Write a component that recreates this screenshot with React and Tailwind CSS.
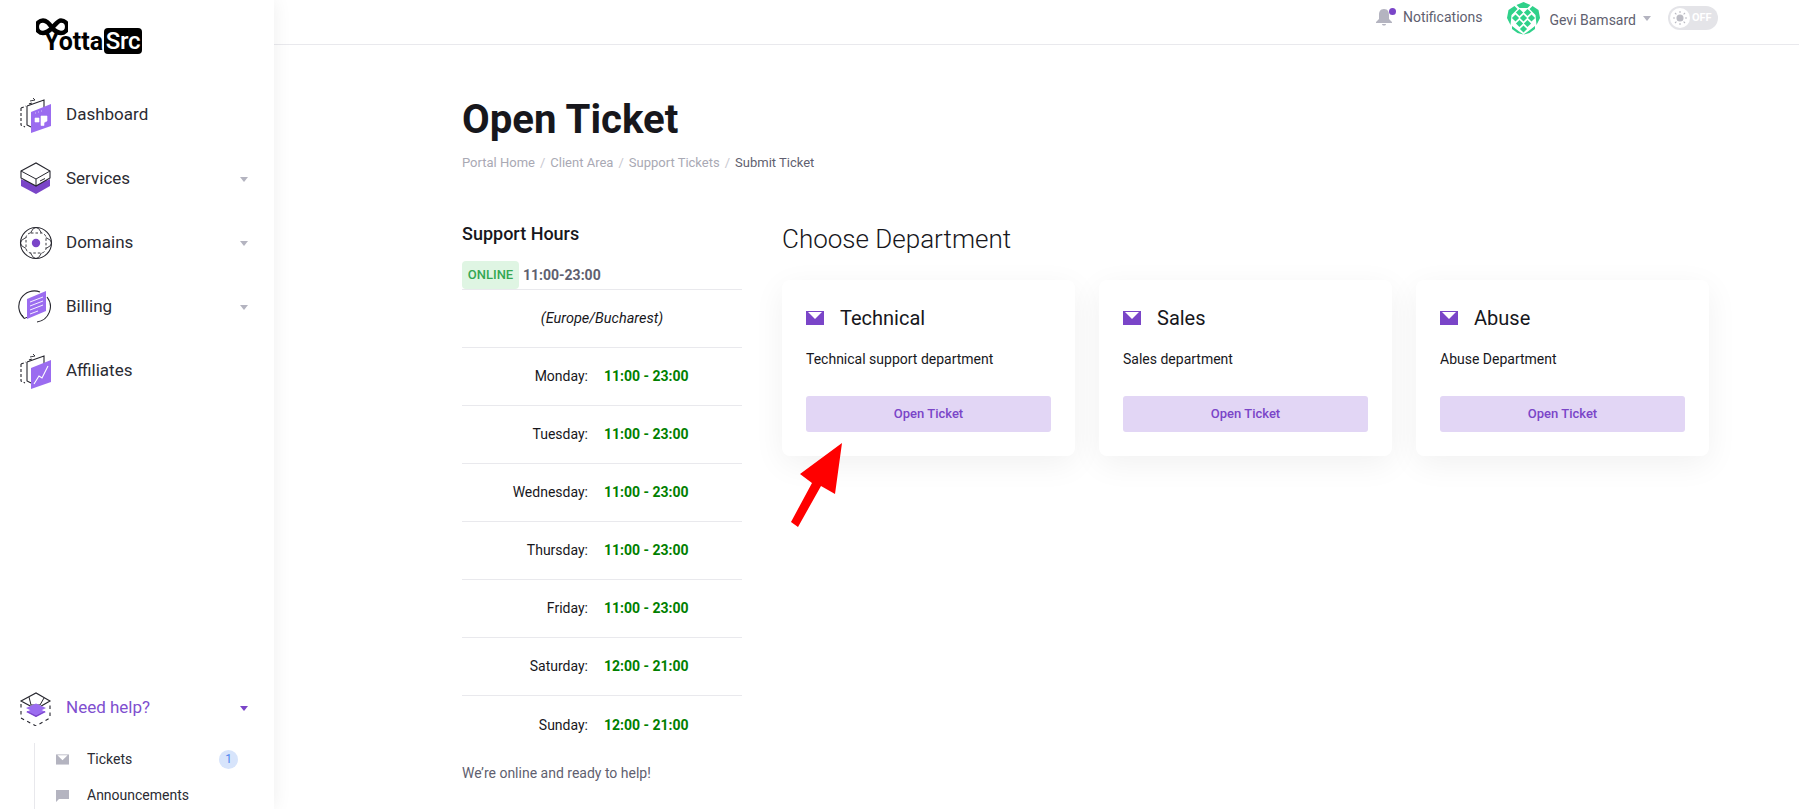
import React from "react";

const P = "#9b6cf0";
const D = "#7a45c8";
const K = "#26262e";

function IconDash({ chart }) {
  return (
    <svg width="36" height="36" viewBox="0 0 36 36" fill="none">
      <path d="M3 11 L8 9 M11 7 L15 5.5 M3 11 V28 L7 30" stroke={K} strokeWidth="1.1" strokeDasharray="3 2" />
      <path d="M9 9 L26 3 V12 M9 9 V28 L13 30" stroke={K} strokeWidth="1.1" />
      <path d="M12 4 L17 3 L15 1" stroke={K} strokeWidth="0.9" />
      <path d="M13 15 L33 7 V29 L13 36 Z" fill={P} />
      {chart ? (
        <path d="M16 31 L21 23 L24 25 L30 13" stroke="#fff" strokeWidth="1.1" />
      ) : (
        <path d="M17 21 h4 v4 h-4 Z M23 19 h6 v5 l-3 1.5 v3 h-3 Z M17 16 h1 M20 15 h1 M23 14 h1" fill="#fff" stroke="#fff" strokeWidth="0.6" />
      )}
    </svg>
  );
}
function IconServices() {
  return (
    <svg width="36" height="36" viewBox="0 0 36 36" fill="none">
      <path d="M3 18 V25 L18 33 L32 25 V18 L18 26 Z" fill={D} />
      <path d="M3 21 L18 29 L32 21 L18 13 Z" fill={D} />
      <path d="M3 10 L18 2 L32 10 V17 L18 25 L3 17 Z" fill="#fff" stroke={K} strokeWidth="1.1" />
      <path d="M3 10 L18 18 L32 10 M18 18 V25 M22 20 L27 17.5" stroke={K} strokeWidth="1" />
    </svg>
  );
}
function IconGlobe() {
  return (
    <svg width="36" height="36" viewBox="0 0 36 36" fill="none">
      <circle cx="18" cy="18" r="15.5" stroke={K} strokeWidth="1.1" />
      <ellipse cx="18" cy="18" rx="15.5" ry="7" stroke={K} strokeWidth="0.9" />
      <ellipse cx="18" cy="18" rx="7" ry="15.5" stroke={K} strokeWidth="0.9" />
      <rect x="8" y="8" width="20" height="20" rx="5" stroke={K} strokeWidth="0.9" strokeDasharray="2.5 2" fill="#fff" />
      <circle cx="18" cy="18" r="4.2" fill={D} />
    </svg>
  );
}
function IconBilling() {
  return (
    <svg width="36" height="36" viewBox="0 0 36 36" fill="none">
      <path d="M6 29 A15.5 15.5 0 0 1 22 3 M29 8 A15.5 15.5 0 0 1 19 33" stroke={K} strokeWidth="1.1" />
      <path d="M4 26 L6 29.5 L10 28" stroke={K} strokeWidth="1" />
      <path d="M9 10 L28 2 V22 L9 30 Z" fill={P} />
      <path d="M12 13 L25 8 M12 17 L25 12 M12 21 L25 16 M12 25 L20 22" stroke="#fff" strokeWidth="0.9" />
    </svg>
  );
}
function IconHelp() {
  return (
    <svg width="36" height="36" viewBox="0 0 36 36" fill="none">
      <path d="M3 14 V28 L18 36 L32 28 V14" stroke={K} strokeWidth="1.1" strokeDasharray="3.5 3.5" />
      <path d="M3 11 L18 3 L32 11 L18 19 Z" fill="#fff" stroke={K} strokeWidth="1.1" />
      <path d="M11 7 L13 15 L22 15 L26 8" stroke={K} strokeWidth="1" fill="#fff" />
      <path d="M8 18 L18 13.5 L28 18 L18 23 Z M8 22 L18 17.5 L28 22 L18 27 Z" fill={P} />
      <path d="M9 21 L18 25.5 L27 21 L27 22 L18 27 L9 22 Z" fill={D} />
    </svg>
  );
}
function Caret({ color = "#b4b4c0" }) {
  return (
    <svg width="8" height="5" viewBox="0 0 8 5" className="shrink-0">
      <path d="M0 0 H8 L4 5 Z" fill={color} />
    </svg>
  );
}
function Envelope({ color, className }) {
  return (
    <svg viewBox="0 0 18 14" className={className}>
      <rect width="18" height="14" fill={color} />
      <path d="M2 1 H16 L9 8 Z" fill="#fff" />
    </svg>
  );
}

function NavItem({ icon, label, caret, active }) {
  return (
    <div className="flex items-center h-16 pl-[18px] pr-[26px]">
      <div className="w-[48px] shrink-0">{icon}</div>
      <span className={`flex-1 text-[17px] ${active ? "text-[#7f4fcf]" : "text-[#2b2b33]"}`}>{label}</span>
      {caret && <Caret color={active ? D : "#b4b4c0"} />}
    </div>
  );
}

function Sidebar() {
  return (
    <aside className="w-[274px] shrink-0 h-full overflow-hidden flex flex-col bg-white shadow-[0_0_18px_rgba(0,0,0,0.07)] z-10">
      <div className="h-[83px] pl-[36px] pt-[18px] shrink-0">
        <div className="relative w-[110px] h-[40px]">
          <svg width="32" height="20" viewBox="0 0 32 20" className="absolute left-0 top-0" fill="none">
            <path d="M16 10 C12 3 9 2.5 7 2.5 A6 6 0 0 0 7 15 C10 15 13 13 16 10 C19 7 22 2.5 25 2.5 A6 6 0 0 1 25 15 C22 15 19 13 16 10 Z" stroke="#000" strokeWidth="4.6" />
          </svg>
          <div className="absolute left-[8px] top-[10px] flex items-center h-[26px]">
            <span className="font-bold text-[25px] leading-none text-black w-[60px]">Yotta</span>
            <span className="bg-black text-white rounded-[4px] font-medium text-[24px] leading-[26px] h-[26px] w-[38px] flex items-center justify-center tracking-[-0.3px]">Src</span>
          </div>
        </div>
      </div>
      <nav className="shrink-0">
        <NavItem icon={<IconDash />} label="Dashboard" />
        <NavItem icon={<IconServices />} label="Services" caret />
        <NavItem icon={<IconGlobe />} label="Domains" caret />
        <NavItem icon={<IconBilling />} label="Billing" caret />
        <NavItem icon={<IconDash chart />} label="Affiliates" />
      </nav>
      <div className="mt-[273px] shrink-0">
        <NavItem icon={<IconHelp />} label="Need help?" caret active />
        <div className="ml-[34px] mt-[3px] border-l border-[#e8e8ec] pl-[21px] pr-[36px] h-[80px]">
          <div className="flex items-center h-[32px]">
            <Envelope color="#b4b4c0" className="w-[13px] h-[11px] shrink-0" />
            <span className="ml-[18px] flex-1 text-[14px] text-[#2b2b33]">Tickets</span>
            <span className="w-[19px] h-[19px] rounded-full bg-[#d7e4fb] text-[#4f86f0] text-[12px] flex items-center justify-center">1</span>
          </div>
          <div className="flex items-center h-[40px]">
            <svg width="13" height="13" viewBox="0 0 13 13" className="shrink-0">
              <path d="M0 1 H13 V10 H3 L0 13 Z" fill="#b4b4c0" />
            </svg>
            <span className="ml-[18px] text-[14px] text-[#2b2b33]">Announcements</span>
          </div>
        </div>
      </div>
    </aside>
  );
}

function Avatar() {
  return (
    <svg width="35" height="34" viewBox="0 0 34 34" className="shrink-0" fill="#2fd18a">
      <path d="M17 1 L10 4 L13 7 H21 L24 4 Z" />
      <path d="M8 5 L2 9 L0.5 17 L4 24 L5 14 L11 8 Z" />
      <path d="M26 5 L32 9 L33.5 17 L30 24 L29 14 L23 8 Z" />
      <path d="M5.5 25 L12 30 L17 33.5 L11 32 L5.5 28 Z M28.5 25 L22 30 L17 33.5 L23 32 L28.5 28 Z" />
      {[[13, 11.5], [21, 11.5], [9, 17], [17, 17], [25, 17], [13, 22.5], [21, 22.5], [17, 28]].map(([x, y]) => (
        <path key={`${x}-${y}`} d={`M${x} ${y - 3.6} L${x + 3.6} ${y} L${x} ${y + 3.6} L${x - 3.6} ${y} Z`} />
      ))}
    </svg>
  );
}

function Header() {
  return (
    <header className="h-[45px] shrink-0 border-b border-[#e9e9ed] flex justify-end items-start pr-[81px] bg-white">
      <div className="relative mt-[8px] w-[17px] h-[20px] shrink-0">
        <svg width="16" height="19" viewBox="0 0 16 19" className="absolute left-0 top-0">
          <path d="M8 1 C4 1 3 4 3 7 V11 L0 14 V15 H16 V14 L13 11 V7 C13 4 12 1 8 1 Z M6 16 H10 C10 18 6 18 6 16 Z" fill="#b4b4c0" />
        </svg>
        <span className="absolute right-[-3px] top-0 w-[7px] h-[7px] rounded-full bg-[#7a45c8]" />
      </div>
      <span className="ml-[10px] mt-[8px] text-[14px] leading-[19px] text-[#5f5f70]">Notifications</span>
      <div className="ml-[23px] mt-[1px]"><Avatar /></div>
      <span className="ml-[9px] mt-[11px] text-[14px] leading-[19px] text-[#5f5f70]">Gevi Bamsard</span>
      <div className="ml-[7px] mt-[16px]"><Caret /></div>
      <div className="ml-[17px] mt-[6px] w-[50px] h-[24px] rounded-full bg-[#e4e4e8] flex items-center pl-[2px] shrink-0">
        <span className="w-[20px] h-[20px] rounded-full bg-white flex items-center justify-center">
          <svg width="14" height="14" viewBox="0 0 14 14" fill="none" stroke="#bcbcc4" strokeWidth="1.1">
            <circle cx="7" cy="7" r="3" fill="#bcbcc4" />
            <path d="M7 0 V2 M7 12 V14 M0 7 H2 M12 7 H14 M2 2 L3.4 3.4 M10.6 10.6 L12 12 M12 2 L10.6 3.4 M3.4 10.6 L2 12" />
          </svg>
        </span>
        <span className="ml-[2px] text-white text-[11px] font-bold">OFF</span>
      </div>
    </header>
  );
}

const hours = [
  ["Monday:", "11:00 - 23:00"],
  ["Tuesday:", "11:00 - 23:00"],
  ["Wednesday:", "11:00 - 23:00"],
  ["Thursday:", "11:00 - 23:00"],
  ["Friday:", "11:00 - 23:00"],
  ["Saturday:", "12:00 - 21:00"],
  ["Sunday:", "12:00 - 21:00"],
];

function Hours() {
  return (
    <div className="w-[280px] shrink-0">
      <h3 className="text-[18px] font-medium leading-[24px] text-[#17171c]">Support Hours</h3>
      <div className="mt-[15px] flex items-center h-[29px] border-b border-[#e9e9ed]">
        <span className="h-[28px] w-[57px] rounded-[4px] bg-[#dff5e3] text-[#34a853] text-[13px] font-medium flex items-center justify-center">ONLINE</span>
        <span className="ml-[4px] text-[14px] font-bold text-[#5f5f70]">11:00-23:00</span>
      </div>
      <div className="h-[58px] border-b border-[#e9e9ed] flex items-center justify-center italic text-[14.5px] text-[#17171c]">(Europe/Bucharest)</div>
      {hours.map(([d, t], i) => (
        <div key={d} className={`h-[58px] flex items-center text-[14px] ${i < hours.length - 1 ? "border-b border-[#e9e9ed]" : ""}`}>
          <span className="w-[126px] text-right text-[#17171c]">{d}</span>
          <span className="ml-[16px] font-bold text-[#008000]">{t}</span>
        </div>
      ))}
      <p className="mt-[9px] text-[14px] leading-[20px] text-[#5f5f70]">We’re online and ready to help!</p>
    </div>
  );
}

function Card({ name, desc, arrow }) {
  return (
    <div className="relative bg-white rounded-[8px] h-[176px] p-6 shadow-[0_8px_32px_rgba(0,0,0,0.06)]">
      <div className="flex items-center h-[28px]">
        <Envelope color="#7a45c8" className="w-[18px] h-[14px] shrink-0" />
        <span className="ml-[16px] text-[20px] text-[#17171c]">{name}</span>
      </div>
      <p className="mt-[17px] text-[14px] leading-[20px] text-[#17171c]">{desc}</p>
      <button className="mt-[27px] w-full h-[36px] rounded-[3px] bg-[#e2d6f5] text-[#7a45c8] text-[13px] font-medium flex items-center justify-center">Open Ticket</button>
      {arrow && (
        <svg width="60" height="90" viewBox="0 0 60 90" className="absolute left-[5px] top-[161px]">
          <path d="M55 2 L48 53 L34 45 L11 86 L4 81 L25 42 L13 33 Z" fill="#ff0000" />
        </svg>
      )}
    </div>
  );
}

export default function App() {
  return (
    <div className="flex h-screen overflow-hidden bg-white font-['Roboto',sans-serif]">
      <Sidebar />
      <div className="flex-1 min-w-0 flex flex-col">
        <Header />
        <main className="pl-[188px] pr-[90px] pt-[51px]">
          <h1 className="text-[40.2px] font-bold leading-[47px] text-[#17171c]">Open Ticket</h1>
          <div className="mt-[10px] flex items-center text-[13px] leading-[20px] text-[#a9a9b4]">
            <span>Portal Home</span><span className="mx-[5px] text-[#c8c8d0]">/</span>
            <span>Client Area</span><span className="mx-[5px] text-[#c8c8d0]">/</span>
            <span>Support Tickets</span><span className="mx-[5px] text-[#c8c8d0]">/</span>
            <span className="text-[#5f5f70]">Submit Ticket</span>
          </div>
          <div className="mt-[49px] flex gap-10">
            <Hours />
            <div className="flex-1 min-w-0">
              <h2 className="text-[26px] font-light leading-[36px] mt-[-1px] text-[#17171c]">Choose Department</h2>
              <div className="mt-[23px] grid grid-cols-3 gap-6">
                <Card name="Technical" desc="Technical support department" arrow />
                <Card name="Sales" desc="Sales department" />
                <Card name="Abuse" desc="Abuse Department" />
              </div>
            </div>
          </div>
        </main>
      </div>
    </div>
  );
}
